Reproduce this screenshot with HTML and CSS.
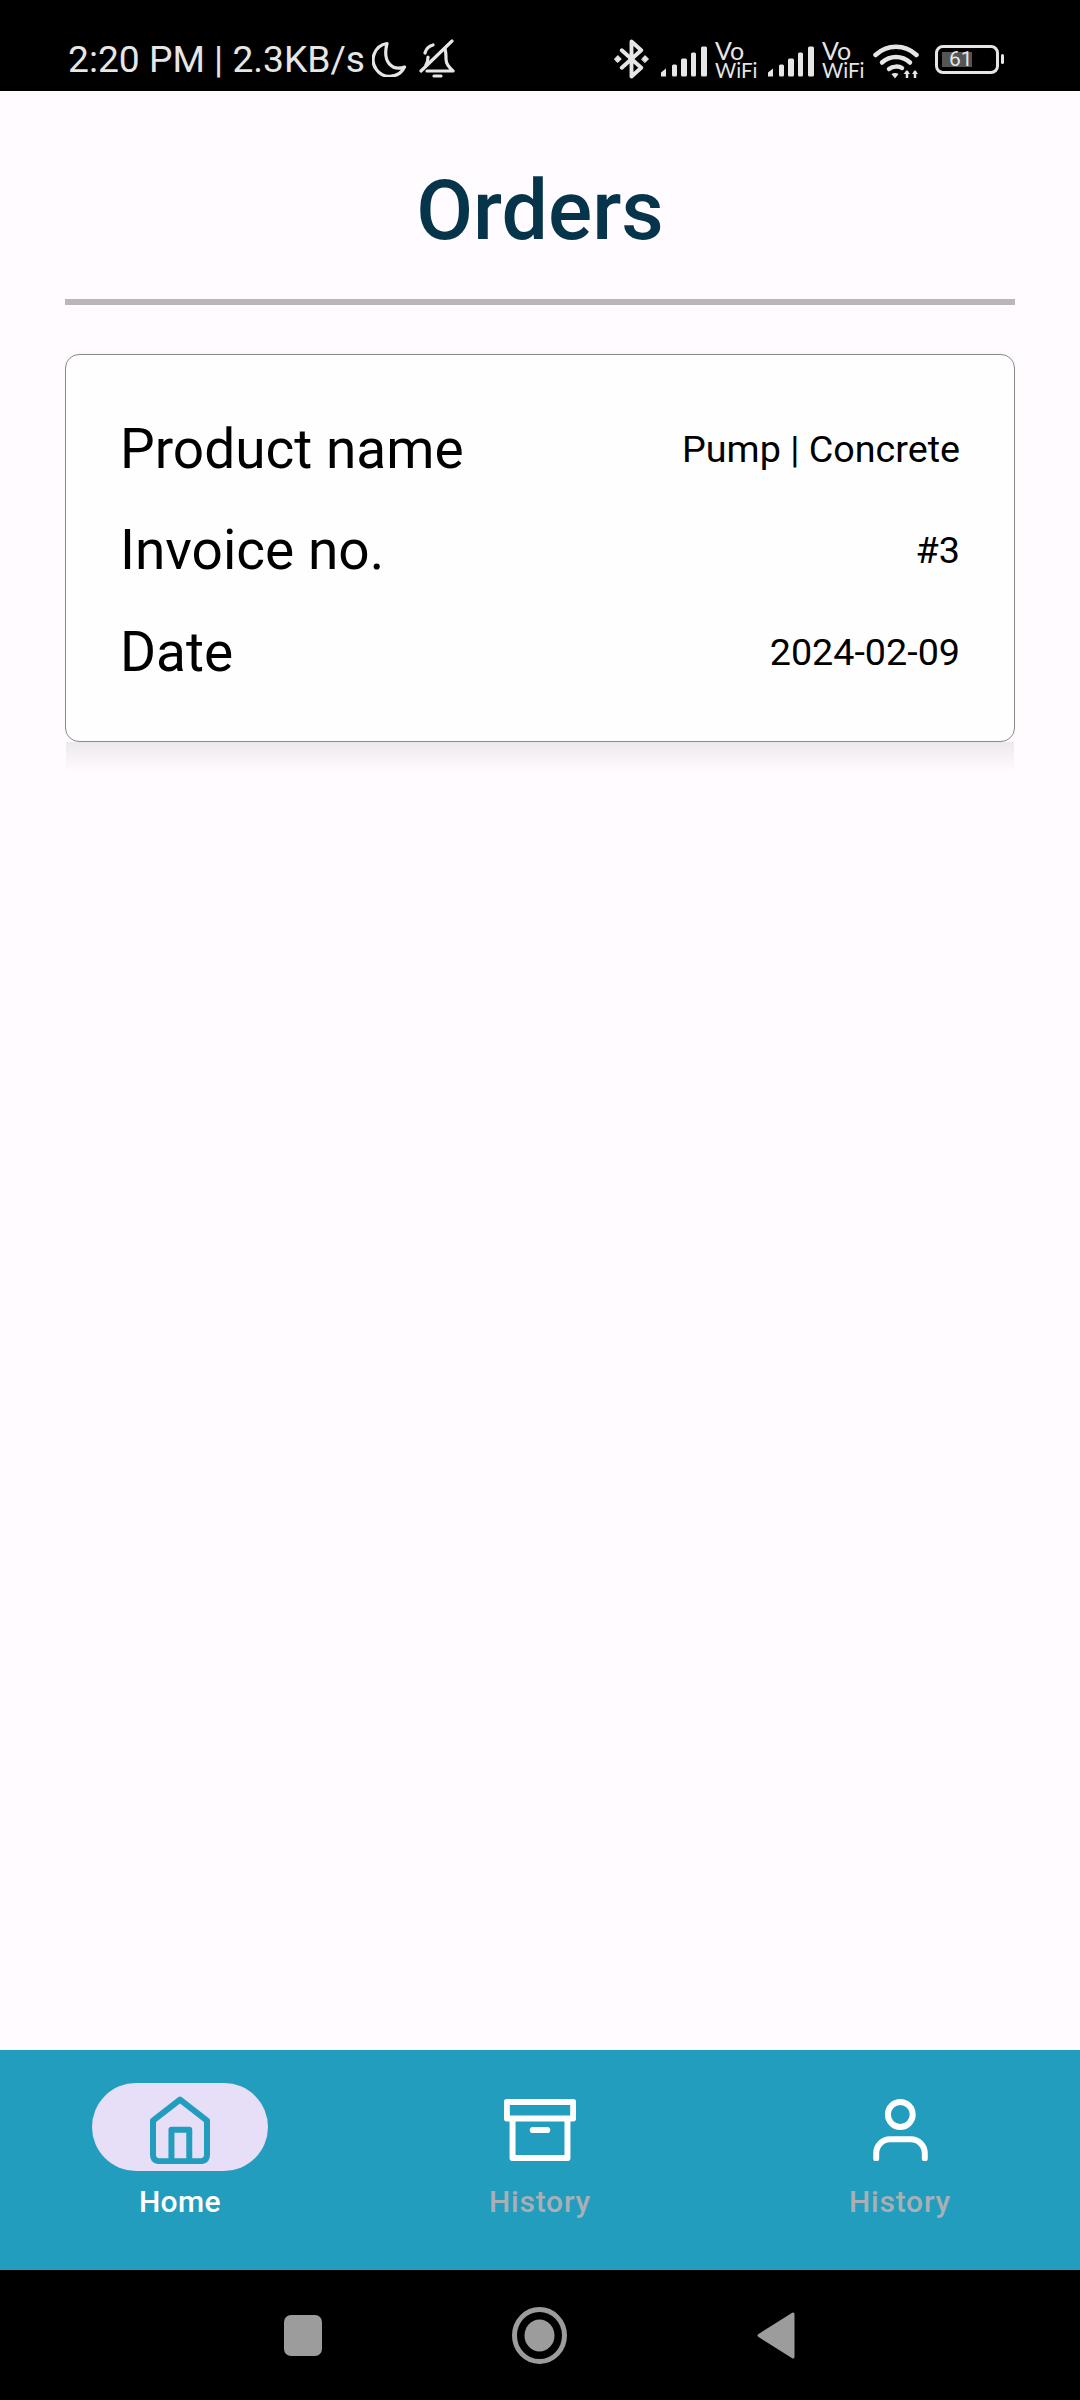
FILE: index.html
```html
<!DOCTYPE html>
<html lang="en">

<head>
  <meta charset="UTF-8" />
  <title>Orders</title>

  <link rel="stylesheet" href="styles.css">
</head>

<body>
  <div class="phone">
    <div class="statusbar">
      <div class="status-left">
        <span class="status-text">2:20 PM | 2.3KB/s</span>
        <svg class="ic-moon" width="35" height="36" viewBox="0 0 35 36" fill="none" stroke="#e6e6e6" stroke-width="3.2" stroke-linecap="round" stroke-linejoin="round">
          <path d="M15 2.5 A16.5 16.5 0 1 0 32.5 26 C21 30 10 22 15 2.5 Z" />
        </svg>
        <svg class="ic-bell" width="37" height="40" viewBox="0 0 37 40" fill="none" stroke="#e6e6e6" stroke-width="3.2" stroke-linecap="round" stroke-linejoin="round">
          <path d="M7 14 C8 10 11 7 15 6 M27 10 C28 13 28 16 28 20 C28 25 31 28 35 32 H9 M8 26 C10 23 10 20 10 18" />
          <path d="M3 32 L34 2" />
          <path d="M16 37 H23" />
        </svg>
      </div>
      <div class="status-right">
        <svg class="ic-bt" width="35" height="40" viewBox="0 0 36 40" fill="none" stroke="#e6e6e6" stroke-width="4" stroke-linejoin="round" stroke-linecap="round">
          <path d="M8 11 L28 29 L18 38 V2 L28 11 L8 29" />
          <path d="M0.5 20 L4 16.5 L7.5 20 L4 23.5 Z M28.5 20 L32 16.5 L35.5 20 L32 23.5 Z" fill="#e6e6e6" stroke-width="1" />
        </svg>
        <svg class="ic-signal" width="46" height="31" viewBox="0 0 46 30" fill="#e6e6e6">
          <path d="M0 30 V26 L5 22 V30 Z" />
          <rect x="11" y="18" width="5" height="12" rx="1.5" />
          <rect x="20" y="12" width="6" height="18" rx="1.5" />
          <rect x="30" y="6" width="5" height="24" rx="1.5" />
          <rect x="40" y="0" width="6" height="30" rx="1.5" />
        </svg>
        <div class="vowifi"><span class="vo">Vo</span><span>WiFi</span></div>
        <svg class="ic-signal" width="46" height="31" viewBox="0 0 46 30" fill="#e6e6e6">
          <path d="M0 30 V26 L5 22 V30 Z" />
          <rect x="11" y="18" width="5" height="12" rx="1.5" />
          <rect x="20" y="12" width="6" height="18" rx="1.5" />
          <rect x="30" y="6" width="5" height="24" rx="1.5" />
          <rect x="40" y="0" width="6" height="30" rx="1.5" />
        </svg>
        <div class="vowifi"><span class="vo">Vo</span><span>WiFi</span></div>
        <svg class="ic-wifi" width="46" height="36" viewBox="0 0 46 36" fill="none" stroke="#e6e6e6" stroke-width="4.5" stroke-linecap="round">
          <path d="M2.5 12 C14 1 32 1 43.5 12" />
          <path d="M9 19.5 C17 12 29 12 37 19.5" />
          <path d="M16 26 C20 23 26 23 29 25" />
          <path d="M22 35.5 L18.5 31 C20.5 29.5 23.5 29.5 25.5 31 Z" fill="#e6e6e6" stroke="none" />
          <path d="M34 35 V28 M42 35 V28" stroke-width="2.5" stroke-linecap="butt" />
          <path d="M30.5 31 L34 27 L37 31 Z M39 31 L42 27 L45 31 Z" fill="#e6e6e6" stroke="none" />
        </svg>
        <div class="battery">
          <div class="battery-body">
            <div class="battery-level">61</div>
          </div>
          <div class="battery-nub"></div>
        </div>
      </div>
    </div>

    <div class="content">
      <h1>Orders</h1>
      <div class="divider"></div>

      <div class="card">
        <div class="row">
          <span class="label">Product name</span>
          <span class="value">Pump | Concrete</span>
        </div>
        <div class="row">
          <span class="label">Invoice no.</span>
          <span class="value">#3</span>
        </div>
        <div class="row">
          <span class="label">Date</span>
          <span class="value">2024-02-09</span>
        </div>
      </div>
      <div class="card-shadow"></div>
    </div>

    <div class="bottomnav">
      <div class="nav-item active">
        <div class="nav-icon">
          <svg width="60" height="68" viewBox="0 0 58 66" fill="none" stroke="#229dbd" stroke-width="5.8" stroke-linejoin="round">
            <path d="M29 3.5 L2.8 24 V57 Q2.8 63.2 9 63.2 H49 Q55.2 63.2 55.2 57 V24 Z" />
            <path d="M20.7 63 V32.7 H38 V63" />
          </svg>
        </div>
        <span class="nav-label">Home</span>
      </div>
      <div class="nav-item">
        <div class="nav-icon">
          <svg width="72" height="62" viewBox="0 0 70 60" fill="none" stroke="#fff" stroke-width="5.8" stroke-linejoin="round">
            <rect x="2.75" y="2.75" width="64.5" height="16" />
            <path d="M8.3 18.75 V57.25 H61.7 V18.75" />
            <path d="M28 30 H42" stroke-width="6" stroke-linecap="round" />
          </svg>
        </div>
        <span class="nav-label">History</span>
      </div>
      <div class="nav-item">
        <div class="nav-icon">
          <svg width="55" height="62" viewBox="0 0 53 60" fill="none" stroke="#fff" stroke-width="5.8" stroke-linecap="round">
            <circle cx="26.3" cy="15" r="12" />
            <path d="M3 57.5 V52.5 A13.5 13.5 0 0 1 16.5 39 H36.5 A13.5 13.5 0 0 1 50 52.5 V57.5" />
          </svg>
        </div>
        <span class="nav-label">History</span>
      </div>
    </div>

    <div class="sysnav">
      <svg width="38" height="41" viewBox="0 0 38 41">
        <rect width="38" height="41" rx="7" fill="#9c9c9c" />
      </svg>
      <svg width="55" height="57" viewBox="0 0 55 57">
        <ellipse cx="27.5" cy="28.5" rx="25" ry="26" fill="none" stroke="#9c9c9c" stroke-width="5" />
        <ellipse cx="27.5" cy="28.5" rx="15" ry="16" fill="#9c9c9c" />
      </svg>
      <svg width="38" height="47" viewBox="0 0 38 47">
        <path d="M2 23.5 L36 2 V45 Z" fill="#9c9c9c" stroke="#9c9c9c" stroke-width="3" stroke-linejoin="round" />
      </svg>
    </div>
  </div>
</body>

</html>
```

FILE: styles.css
```css
* {
  box-sizing: border-box;
}

body {
  margin: 0;
  font-family: Roboto, sans-serif;
  background-color: #000;
}

.phone {
  width: 1080px;
  height: 2400px;
  display: flex;
  flex-direction: column;
}

/* status bar */
.statusbar {
  height: 91px;
  padding: 27px 76px 0 68px;
  background-color: #000;
  color: #e6e6e6;
  display: flex;
  justify-content: space-between;
  align-items: center;
}

.status-left,
.status-right {
  display: flex;
  align-items: center;
}

.status-text {
  font-size: 37.2px;
  line-height: 44px;
  white-space: nowrap;
}

.ic-moon {
  margin-left: 7px;
}

.ic-bell {
  margin-left: 11px;
}

.status-right .ic-signal {
  margin-left: 12px;
  margin-top: 4px;
}

.status-right .vowifi + .ic-signal {
  margin-left: 10px;
}

.vowifi {
  margin-left: 8px;
  width: 43px;
  display: flex;
  flex-direction: column;
  font-family: Lato, sans-serif;
  font-size: 20.5px;
  line-height: 18px;
}

.vo {
  font-size: 25px;
  line-height: 21px;
}

.ic-wifi {
  margin-left: 8px;
  margin-top: 4px;
}

.battery {
  margin-left: 16px;
  display: flex;
  align-items: center;
  gap: 2px;
}

.battery-body {
  width: 64px;
  height: 29px;
  border: 3px solid #e6e6e6;
  border-radius: 8px;
  padding: 4px;
}

.battery-level {
  width: 30px;
  height: 15px;
  background-color: #555;
  font-size: 21px;
  line-height: 15px;
  padding-left: 7px;
  white-space: nowrap;
}

.battery-nub {
  width: 3px;
  height: 10px;
  border-radius: 2px;
  background-color: #e6e6e6;
}

/* page */
.content {
  flex: 1;
  background-color: #fffbff;
  padding: 0 65px;
}

h1 {
  margin: 0;
  padding-top: 75px;
  height: 208px;
  font-size: 82.5px;
  line-height: 90px;
  font-weight: 500;
  color: #05344b;
  text-align: center;
}

.divider {
  height: 6px;
  background-color: #b9b7bb;
}

.card {
  margin-top: 49px;
  height: 388px;
  padding: 43px 54px 0 54px;
  background-color: #fffefe;
  border: 1.5px solid #8a8a8a;
  border-radius: 14px;
  box-shadow: 0 -2px 6px rgba(0, 0, 0, 0.025);
}

.card-shadow {
  height: 30px;
  margin: 0 1px;
  background: linear-gradient(rgba(0, 0, 0, 0.075), rgba(0, 0, 0, 0));
}

.row {
  height: 101.5px;
  display: flex;
  justify-content: space-between;
  align-items: center;
}

.label {
  font-size: 55px;
  color: #000;
}

.value {
  font-size: 37.7px;
  color: #000;
}

/* bottom navigation */
.bottomnav {
  height: 220px;
  padding-top: 33px;
  background-color: #229dbd;
  display: grid;
  grid-template-columns: repeat(3, 1fr);
}

.nav-item {
  display: flex;
  flex-direction: column;
  align-items: center;
}

.nav-icon {
  width: 176px;
  height: 88px;
  padding-top: 5px;
  border-radius: 44px;
  display: flex;
  align-items: center;
  justify-content: center;
}

.active .nav-icon {
  background-color: #e7def7;
}

.nav-label {
  margin-top: 13px;
  font-size: 30px;
  line-height: 36px;
  font-weight: 500;
  letter-spacing: 0.8px;
  color: #a8b0b5;
}

.active .nav-label {
  letter-spacing: 0.4px;
  color: #fff;
}

/* android buttons */
.sysnav {
  height: 130px;
  padding-left: 284px;
  background-color: #000;
  display: flex;
  align-items: center;
  gap: 190px;
}
```
